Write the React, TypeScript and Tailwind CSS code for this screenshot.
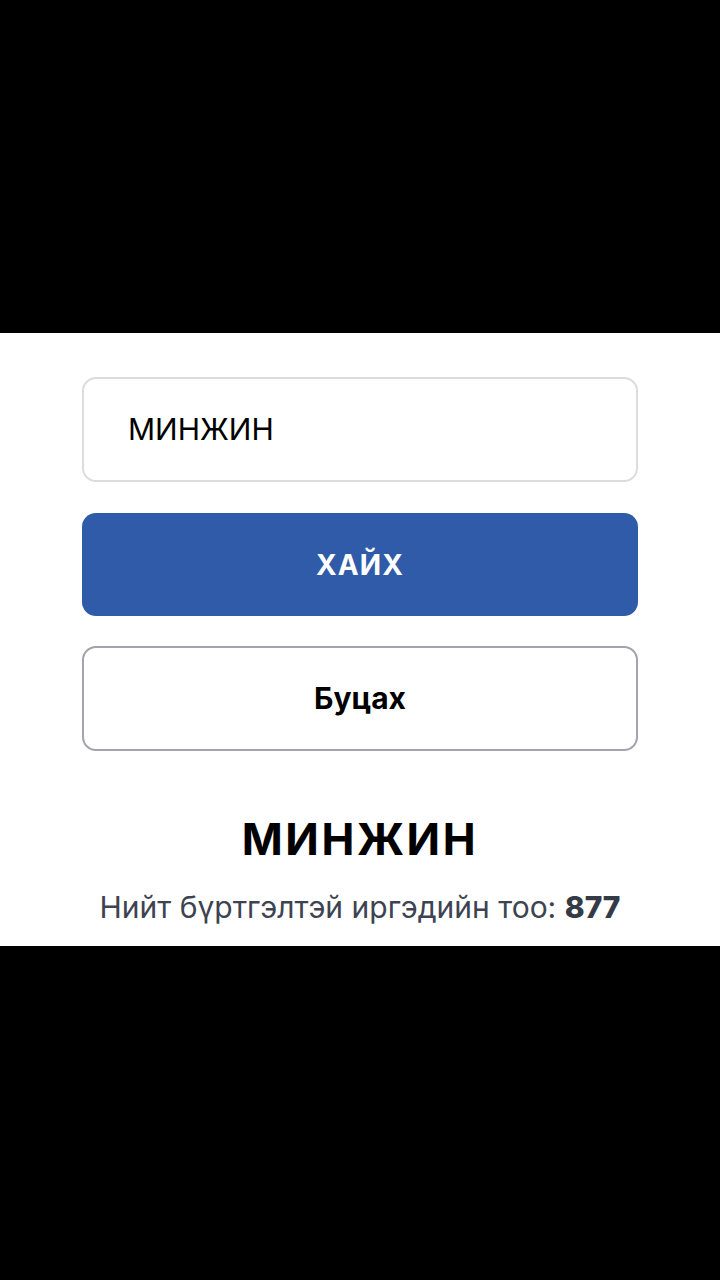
export default function App() {
  return (
    <div className="flex min-h-[1280px] w-[720px] flex-col bg-black" style={{ fontFamily: 'Inter, Roboto, "Noto Sans", sans-serif' }}>
      <div className="h-[333px] shrink-0 bg-black" />
      <div className="flex h-[613px] shrink-0 flex-col bg-white px-[82px] pt-[44px]">
        <div className="flex h-[105px] items-center rounded-[14px] border-2 border-[#dcdcdc] pl-[44px] text-[30px] text-black">
          МИНЖИН
        </div>
        <button className="mt-[31px] flex h-[103px] items-center justify-center rounded-[14px] bg-[#2f5ba8] text-[28px] font-bold tracking-[0.04em] text-white">
          ХАЙХ
        </button>
        <button className="mt-[30px] flex h-[105px] items-center justify-center rounded-[14px] border-2 border-[#a3a3ab] bg-white text-[30px] font-bold text-black">
          Буцах
        </button>
        <div className="mt-[60px] text-center text-[44px] font-bold leading-[56px] tracking-[0.06em] text-black">
          МИНЖИН
        </div>
        <div className="mt-[20px] text-center text-[30px] leading-[40px] text-[#3d4350]">
          Нийт бүртгэлтэй иргэдийн тоо: <span className="font-extrabold text-[#343a46]">877</span>
        </div>
      </div>
      <div className="flex-1 bg-black" />
    </div>
  );
}
